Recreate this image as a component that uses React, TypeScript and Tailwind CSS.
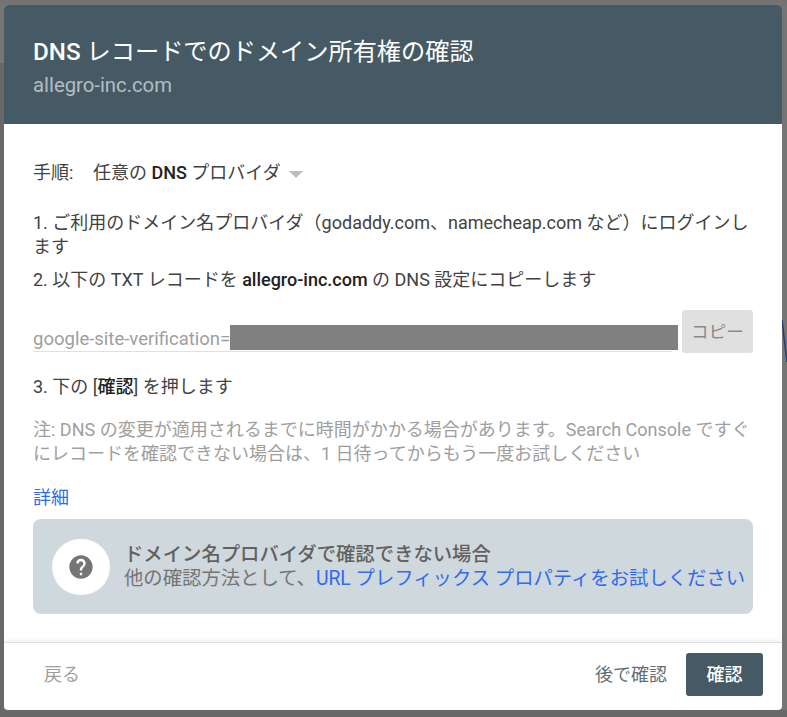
const font = { fontFamily: 'Roboto, "Noto Sans CJK JP", sans-serif' }

export default function App() {
  return (
    <div className="relative h-[717px] w-[787px] overflow-hidden bg-[#686868] pl-[4px] pr-[5px] pt-[5px]" style={font}>
      {/* page dimmed behind the dialog */}
      <div className="absolute left-0 top-0 h-[63px] w-[4px] bg-[#767676]" />
      <div className="absolute right-0 top-0 h-[710px] w-[5px] bg-[#757575]" />
      <div className="absolute left-0 top-0 h-[5px] w-full bg-[#737373]" />
      <svg className="absolute right-0 top-[320px] h-[42px] w-[5px]" viewBox="0 0 5 42">
        <path d="M0 0 L5 42" stroke="#1f3f7f" strokeWidth="1.5" fill="none" />
      </svg>

      <div className="relative flex h-[705px] w-[778px] flex-col overflow-hidden rounded-[4px] bg-white">
        <header className="h-[119px] bg-[#455a64] px-[29px] pt-[29px]">
          <h1 className="text-[24.2px] leading-[36px] font-medium text-white">
            DNS <span className="font-normal">レコードでのドメイン所有権の確認</span>
          </h1>
          <p className="mt-[1px] text-[20.3px] leading-[28px] text-[#b5bdc1]">allegro-inc.com</p>
        </header>

        <main className="flex-1 px-[29px] pt-[37px] text-[18px] leading-[24px] text-[#424242]">
          <div className="flex items-center">
            <span className="w-[60px]">手順:</span>
            <span>
              任意の <span className="font-medium text-[#212121]">DNS</span> プロバイダ
            </span>
            <span className="ml-[8px] mt-[2px] h-0 w-0 border-x-[7px] border-t-[7px] border-x-transparent border-t-[#bdbdbd]" />
          </div>

          <p className="mt-[26px]">
            1. ご利用のドメイン名プロバイダ（godaddy.com、namecheap.com など）にログインします
          </p>
          <p className="mt-[9px]">
            2. 以下の TXT レコードを <span className="font-medium text-[#212121]">allegro-inc.com</span> の DNS 設定にコピーします
          </p>

          <div className="mt-[18px] flex items-start">
            <div className="relative h-[42px] w-[639px] border-b border-[#e0e0e0] pt-[17px] text-[18.5px] text-[#9e9e9e]">
              google-site-verification=
              <div className="absolute left-[197px] top-[15px] h-[25px] w-[448px] bg-[#808080]" />
            </div>
            <button className="ml-[10px] h-[43px] w-[71px] rounded-[3px] bg-[#e0e0e0] text-center text-[17.6px] text-[#8a8a8a]">
              コピー
            </button>
          </div>

          <p className="mt-[22px]">
            3. 下の [<span className="font-medium text-[#212121]">確認</span>] を押します
          </p>

          <p className="mt-[19px] text-[#9e9e9e]">
            注: DNS の変更が適用されるまでに時間がかかる場合があります。Search Console ですぐにレコードを確認できない場合は、1 日待ってからもう一度お試しください
          </p>

          <a className="mt-[20px] block text-[#2f6bf0]">詳細</a>

          <div className="mt-[9px] flex h-[95px] items-center rounded-[8px] bg-[#cfd8dc] pl-[19px]">
            <div className="flex h-[56px] w-[58px] shrink-0 items-center justify-center rounded-full bg-white">
              <svg viewBox="0 0 24 24" className="h-[28px] w-[28px] fill-[#757575]">
                <path d="M12 2C6.48 2 2 6.48 2 12s4.48 10 10 10 10-4.48 10-10S17.52 2 12 2zm1 17h-2v-2h2v2zm2.07-7.75l-.9.92C13.45 12.9 13 13.5 13 15h-2v-.5c0-1.1.45-2.1 1.17-2.83l1.24-1.26c.37-.36.59-.86.59-1.41 0-1.1-.9-2-2-2s-2 .9-2 2H8c0-2.21 1.79-4 4-4s4 1.79 4 4c0 .88-.36 1.68-.93 2.25z" />
              </svg>
            </div>
            <div className="ml-[14px] whitespace-nowrap text-[19.35px] leading-[24px] text-[#616161]">
              <p className="font-medium">ドメイン名プロバイダで確認できない場合</p>
              <p className="text-[#757575]">
                他の確認方法として、<span className="text-[#2f6bf0]">URL プレフィックス プロパティをお試しください</span>
              </p>
            </div>
          </div>
        </main>

        <footer className="flex h-[68px] items-start justify-between border-t border-[#e0e0e0] pl-[40px] pr-[19px] pt-[10px] shadow-[0_-2px_4px_rgba(0,0,0,0.06)]">
          <button className="h-[43px] text-[18px] text-[#9e9e9e]">戻る</button>
          <div className="flex items-center">
            <button className="text-[18px] text-[#5f6f77]">後で確認</button>
            <button className="ml-[19px] h-[43px] w-[77px] rounded-[3px] bg-[#455a64] text-[18px] font-medium text-white">
              確認
            </button>
          </div>
        </footer>
      </div>
    </div>
  )
}
